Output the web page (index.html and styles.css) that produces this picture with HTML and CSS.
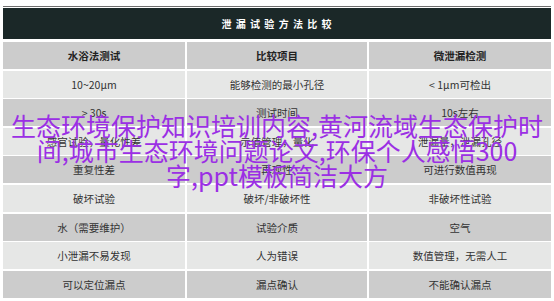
FILE: index.html
```html
<!DOCTYPE html>
<html lang="zh-CN">
<head>
<meta charset="utf-8">
<title>泄漏试验方法比较</title>
<link rel="stylesheet" href="styles.css">
</head>
<body>
<div class="page">
  <div class="rule"></div>
  <div class="title">泄 漏 试 验 方 法 比 较</div>
  <div class="grid">
    <div class="cell dark head">水浴法测试</div>
    <div class="cell dark head">比较项目</div>
    <div class="cell dark head">微泄漏检测</div>

    <div class="cell light">10~20μm</div>
    <div class="cell light">能够检测的最小孔径</div>
    <div class="cell light">&lt; 1μm可检出</div>

    <div class="cell dark">&gt; 30s</div>
    <div class="cell dark">测试时间</div>
    <div class="cell dark">10s左右</div>

    <div class="cell light">感官试验，量化性差</div>
    <div class="cell light">示值管理，量化</div>
    <div class="cell light">泄漏量，泄漏孔径</div>

    <div class="cell dark">重复性差</div>
    <div class="cell dark">再现性</div>
    <div class="cell dark">可进行数值再现</div>

    <div class="cell light">破坏试验</div>
    <div class="cell light">破坏/非破坏性</div>
    <div class="cell light">非破坏性试验</div>

    <div class="cell dark">水（需要维护）</div>
    <div class="cell dark">试验介质</div>
    <div class="cell dark">空气</div>

    <div class="cell light">小泄漏不易发现</div>
    <div class="cell light">人为错误</div>
    <div class="cell light">数值管理，无需人工</div>

    <div class="cell dark">可以定位漏点</div>
    <div class="cell dark">漏点确认</div>
    <div class="cell dark">不能确认漏点</div>
  </div>
  <div class="overlay">生态环境保护知识培训内容,黄河流域生态保护时间,城市生态环境问题论文,环保个人感悟300字,ppt模板简洁大方</div>
</div>
</body>
</html>
```
FILE: styles.css
```css
html, body {
  margin: 0;
  padding: 0;
  background: #ffffff;
}
.page {
  position: relative;
  width: 554px;
  height: 301px;
  padding: 6px 3px 0 3px;
  box-sizing: border-box;
  font-family: "Noto Sans CJK SC", "Noto Sans", sans-serif;
  overflow: hidden;
}
.rule {
  height: 1px;
  background: #6e6e6e;
  margin-bottom: 1px;
}
.title {
  height: 31px;
  background: #1b2828;
  color: #ffffff;
  font-weight: bold;
  font-size: 10px;
  letter-spacing: 1px;
  display: flex;
  align-items: center;
  justify-content: center;
  margin-bottom: 3px;
}
.grid {
  display: grid;
  grid-template-columns: 182px 180px 182px;
  grid-template-rows: repeat(9, 27px);
  column-gap: 2px;
  row-gap: 1.6px;
}
.cell {
  display: flex;
  align-items: center;
  justify-content: center;
  font-size: 10.5px;
  color: #333333;
}
.dark {
  background: #cccccc;
}
.light {
  background: #e6e7e6;
}
.head {
  font-weight: bold;
  color: #222222;
}
.overlay {
  position: absolute;
  left: 6px;
  right: 6px;
  top: 113px;
  text-align: center;
  color: #9b2fe4;
  font-size: 25px;
  line-height: 25px;
  font-family: "Noto Sans CJK SC", sans-serif;
}
```
